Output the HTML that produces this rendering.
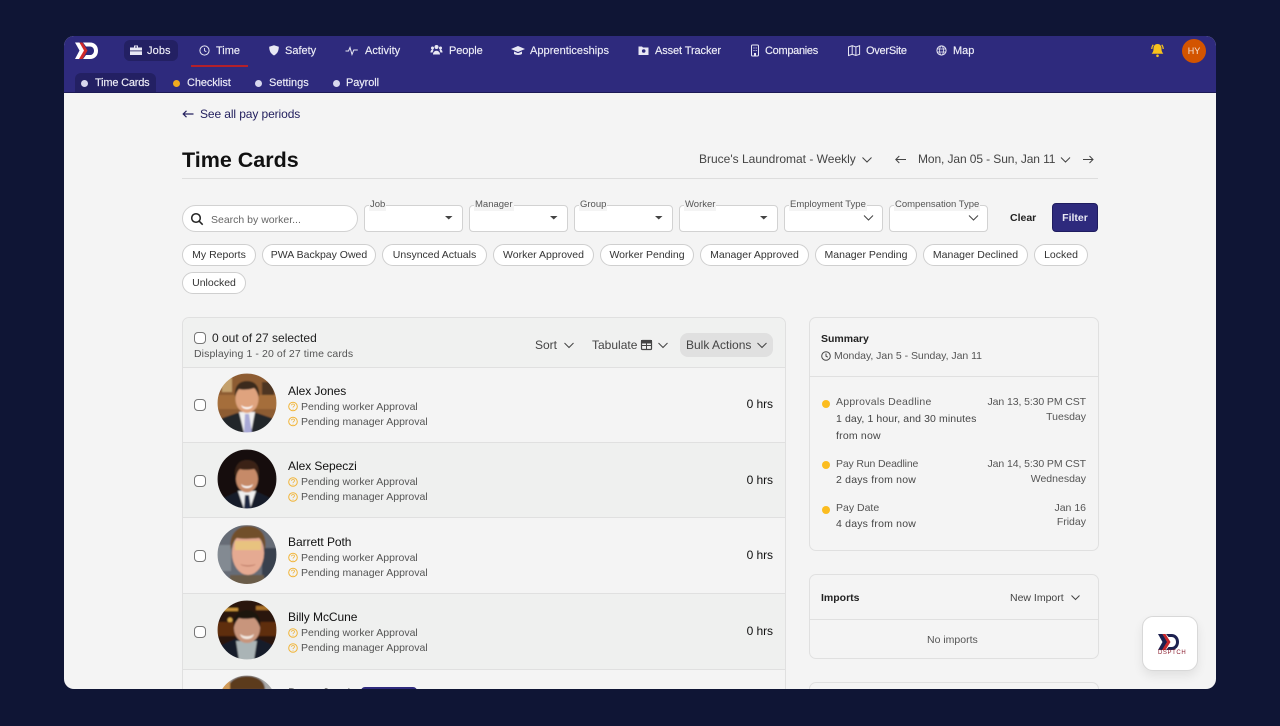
<!DOCTYPE html>
<html lang="en"><head><meta charset="utf-8"><title>Time Cards</title>
<style>
*{box-sizing:border-box}
html,body{margin:0;padding:0;width:1280px;height:726px;overflow:hidden;background:#0f1535;font-family:"Liberation Sans",sans-serif}
#win{position:absolute;left:64px;top:36px;width:1152px;height:653px;border-radius:10px;overflow:hidden;background:#f4f4f4}
#in{position:absolute;left:-64px;top:-36px;width:1280px;height:726px}
.a{position:absolute}
.t{position:absolute;white-space:nowrap;line-height:14px;height:14px}
svg{position:absolute;overflow:visible}
.nav{color:#eeeef8;font-size:11px;-webkit-text-stroke:.15px #eeeef8}
.sel{position:absolute;top:205px;width:99px;height:27px;background:#fff;border:1px solid #d2d2d2;border-radius:4px}
.lab{position:absolute;top:199px;height:12px;line-height:12px;font-size:9.5px;color:#555;background:#f4f4f4;padding:0 1px;white-space:nowrap}
.chip{position:absolute;height:22px;line-height:20px;background:#fff;border:1px solid #cfcfcf;border-radius:11px;font-size:10.5px;color:#333;text-align:center;white-space:nowrap}
.name{font-size:12px;color:#111;letter-spacing:-.05px}
.st{font-size:10.5px;color:#555}
.g{font-size:10.5px;color:#555}
.cb{position:absolute;left:194px;width:12px;height:12px;background:#fff;border:1px solid #777;border-radius:4px}
.panel{position:absolute;border:1px solid #e0e0e0;border-radius:7px}
.r{text-align:right}
</style></head><body>
<div id="win"><div id="in">
<!-- nav -->
<div class="a" style="left:64px;top:36px;width:1152px;height:57px;background:#2e2a7d;border-bottom:1px solid #1c1a55"></div>
<svg style="left:0;top:0" width="1" height="1">
<path d="M75 42.500h4.500l5 8-5 8.500h-4.500l4.500-8.500z" fill="#fff"/>
<path d="M79.500 42.500h3l5 8-5 8.500h-3.500l5-8.500z" fill="#d02a2a"/>
<path d="M83 42.500h7c5 0 8 3.500 8 8.200s-3 8.300-8 8.300h-7l3-4h4c2.500 0 4-2 4-4.300s-1.500-4.200-4-4.200h-4z" fill="#fff"/>
</svg>
<div class="a" style="left:124px;top:40px;width:54px;height:21px;background:#232063;border-radius:6px"></div>
<div class="a" style="left:191px;top:65px;width:57px;height:2px;background:#b3202a"></div>
<svg style="left:0;top:0" width="1" height="1" fill="#e8e8f4" stroke="none">
<path d="M130 47.500h12v7.500h-12zM134 47.500v-2h4v2h-1v-1h-2v1z"/><rect x="130" y="50.500" width="12" height=".8" fill="#232063"/>
<circle cx="204.500" cy="50.500" r="4.600" fill="none" stroke="#e8e8f4" stroke-width="1"/><path d="M204.500 48v2.700l1.800 1" fill="none" stroke="#e8e8f4" stroke-width=".9"/>
<path d="M274 45.200l4.800 1.600c0 4-1.400 7-4.800 8.700-3.400-1.700-4.800-4.700-4.800-8.700z"/>
<path d="M345.500 51h3l1.500-3.500 2 7 1.800-4.500h4" fill="none" stroke="#e8e8f4" stroke-width="1"/>
<circle cx="436.500" cy="47" r="2"/><circle cx="432.500" cy="48" r="1.500"/><circle cx="440.500" cy="48" r="1.500"/><path d="M433 54.500c0-5 7-5 7 0zM430.500 52.500c0-3 2.500-3.500 3-2.500l-1 2.500zM442.500 52.500c0-3-2.500-3.500-3-2.500l1 2.500z"/>
<path d="M518 46l7 3-7 3-7-3z"/><path d="M514 51.500v2.500c2 1.300 6 1.300 8 0v-2.500l-4 1.800z"/>
<path d="M638.500 46.500h3.500l1 1h5.500v7.500h-10z"/><circle cx="643.700" cy="51" r="1.800" fill="#2e2a7d"/>
<rect x="751.500" y="45" width="7" height="11" rx="1" fill="none" stroke="#e8e8f4" stroke-width="1"/><path d="M753.500 47.500h1v1h-1zM755.700 47.500h1v1h-1zM753.500 50h1v1h-1zM755.700 50h1v1h-1zM754 53h2v3h-2z"/>
<path d="M848.500 47l3.700-1.300 3.700 1.300 3.700-1.300v8.600l-3.700 1.200-3.700-1.200-3.700 1.200zM852.200 45.700v8.800M855.900 47v8.800" fill="none" stroke="#e8e8f4" stroke-width="1"/>
<circle cx="941.500" cy="50.500" r="4.600" fill="none" stroke="#e8e8f4" stroke-width="1"/><ellipse cx="941.500" cy="50.500" rx="2" ry="4.600" fill="none" stroke="#e8e8f4" stroke-width=".8"/><path d="M937 49h9M937 52h9" stroke="#e8e8f4" stroke-width=".8"/>
</svg>
<span class="t nav" style="left:147px;top:44px;letter-spacing:.1px">Jobs</span>
<span class="t nav" style="left:216px;top:44px">Time</span>
<span class="t nav" style="left:285px;top:44px">Safety</span>
<span class="t nav" style="left:365px;top:44px;letter-spacing:.05px">Activity</span>
<span class="t nav" style="left:449px;top:44px;letter-spacing:-.1px">People</span>
<span class="t nav" style="left:530px;top:44px;letter-spacing:.05px">Apprenticeships</span>
<span class="t nav" style="left:655px;top:44px;letter-spacing:-.1px">Asset Tracker</span>
<span class="t nav" style="left:765px;top:44px;letter-spacing:-.3px">Companies</span>
<span class="t nav" style="left:866px;top:44px;letter-spacing:-.25px">OverSite</span>
<span class="t nav" style="left:953px;top:44px">Map</span>
<svg style="left:0;top:0" width="1" height="1">
<path d="M1157.500 44c3 0 4 2.300 4 4.800 0 2.500.8 3.700 1.800 5h-11.600c1-1.300 1.800-2.500 1.800-5 0-2.500 1-4.800 4-4.800z" fill="#f8c21c"/><circle cx="1157.500" cy="55.800" r="1.300" fill="#f8c21c"/>
<path d="M1151.800 49c0-1.800.6-3.200 1.500-4.300M1163.200 49c0-1.800-.6-3.200-1.500-4.300" fill="none" stroke="#f8c21c" stroke-width="1.200"/>
</svg>
<div class="a" style="left:1182px;top:39px;width:24px;height:24px;border-radius:50%;background:#d35400;color:#f5e6da;font-size:9px;line-height:24px;text-align:center">HY</div>
<!-- subnav -->
<div class="a" style="left:75px;top:73px;width:81px;height:19px;background:#232063;border-radius:6px 6px 0 0"></div>
<div class="a" style="left:81px;top:79.500px;width:7px;height:7px;border-radius:50%;background:#d8d8ee"></div>
<div class="a" style="left:173px;top:79.500px;width:7px;height:7px;border-radius:50%;background:#f0aa1e"></div>
<div class="a" style="left:255px;top:79.500px;width:7px;height:7px;border-radius:50%;background:#d8d8ee"></div>
<div class="a" style="left:333px;top:79.500px;width:7px;height:7px;border-radius:50%;background:#d8d8ee"></div>
<span class="t nav" style="left:95px;top:76px;letter-spacing:-.2px">Time Cards</span>
<span class="t nav" style="left:187px;top:76px;letter-spacing:-.1px">Checklist</span>
<span class="t nav" style="left:269px;top:76px">Settings</span>
<span class="t nav" style="left:346px;top:76px;letter-spacing:-.1px">Payroll</span>
<!-- header -->
<svg style="left:0;top:0" width="1" height="1" fill="none" stroke="#24215f" stroke-width="1.200">
<path d="M183 114h10.500M186.500 110.800l-3.300 3.200 3.300 3.200"/></svg>
<span class="t" style="left:200px;top:107px;font-size:12px;color:#24215f;letter-spacing:-.1px">See all pay periods</span>
<span class="t" style="left:182px;top:147px;height:26px;line-height:26px;font-size:21.500px;font-weight:700;color:#111">Time Cards</span>
<span class="t" style="left:699px;top:152px;font-size:12px;color:#444">Bruce's Laundromat - Weekly</span>
<span class="t" style="left:918px;top:152px;font-size:12px;color:#444;letter-spacing:-.1px">Mon, Jan 05 - Sun, Jan 11</span>
<svg style="left:0;top:0" width="1" height="1" fill="none" stroke="#444" stroke-width="1">
<path d="M862.500 157.500l4.500 4.500 4.500-4.500M1061 157.500l4.500 4.500 4.500-4.500M896 159.500h10M899.300 156l-3.500 3.500 3.500 3.500M1083 159.500h10M1089.500 156l3.500 3.500-3.500 3.500"/></svg>
<div class="a" style="left:182px;top:178px;width:916px;height:1px;background:#ddd"></div>
<!-- filters -->
<div class="a" style="left:182px;top:205px;width:176px;height:27px;background:#fff;border:1px solid #d2d2d2;border-radius:14px"></div>
<svg style="left:0;top:0" width="1" height="1" fill="none" stroke="#222" stroke-width="1.500"><circle cx="196" cy="218" r="4.300"/><path d="M199.200 221.200l3.500 3.500"/></svg>
<span class="t" style="left:211px;top:213px;font-size:10.500px;color:#666">Search by worker...</span>
<div class="sel" style="left:364px"></div><div class="sel" style="left:469px"></div><div class="sel" style="left:574px"></div><div class="sel" style="left:679px"></div><div class="sel" style="left:784px"></div><div class="sel" style="left:889px"></div>
<span class="lab" style="left:369px">Job</span><span class="lab" style="left:474px">Manager</span><span class="lab" style="left:579px">Group</span><span class="lab" style="left:684px">Worker</span><span class="lab" style="left:789px">Employment Type</span><span class="lab" style="left:894px">Compensation Type</span>
<svg style="left:0;top:0" width="1" height="1">
<path d="M445 216h7.500l-3.750 3.500zM550 216h7.500l-3.750 3.500zM655 216h7.500l-3.750 3.500zM760 216h7.500l-3.750 3.500z" fill="#444"/>
<path d="M864 215.500l4.500 4.500 4.500-4.500M969 215.500l4.500 4.500 4.500-4.500" fill="none" stroke="#444" stroke-width="1"/></svg>
<span class="t" style="left:1010px;top:211px;font-size:10.500px;font-weight:700;color:#222">Clear</span>
<div class="a" style="left:1052px;top:203px;width:46px;height:29px;background:#2e2a7d;border:1px solid #1f1c5f;border-radius:4px;color:#e8e8f4;font-size:10.500px;font-weight:700;line-height:28px;text-align:center">Filter</div>
<!-- chips -->
<div class="chip" style="left:182px;top:244px;width:74px">My Reports</div>
<div class="chip" style="left:262px;top:244px;width:114px">PWA Backpay Owed</div>
<div class="chip" style="left:382px;top:244px;width:105px">Unsynced Actuals</div>
<div class="chip" style="left:493px;top:244px;width:101px">Worker Approved</div>
<div class="chip" style="left:600px;top:244px;width:94px">Worker Pending</div>
<div class="chip" style="left:700px;top:244px;width:109px">Manager Approved</div>
<div class="chip" style="left:815px;top:244px;width:102px">Manager Pending</div>
<div class="chip" style="left:923px;top:244px;width:105px">Manager Declined</div>
<div class="chip" style="left:1034px;top:244px;width:54px">Locked</div>
<div class="chip" style="left:182px;top:272px;width:64px">Unlocked</div>
<!-- list -->
<div class="panel" style="left:182px;top:317px;width:604px;height:420px;background:#f4f4f4"></div>
<div class="a" style="left:183px;top:318px;width:602px;height:49px;background:#f0f1f0;border-radius:7px 7px 0 0"></div>
<div class="a" style="left:183px;top:367px;width:602px;height:1px;background:#e0e0e0"></div>
<div class="a" style="left:183px;top:442px;width:602px;height:76px;background:#eff0ef;border-top:1px solid #e0e0e0;border-bottom:1px solid #e0e0e0"></div>
<div class="a" style="left:183px;top:593px;width:602px;height:77px;background:#eff0ef;border-top:1px solid #e0e0e0;border-bottom:1px solid #e0e0e0"></div>
<div class="cb" style="top:332px"></div>
<span class="t" style="left:212px;top:331px;font-size:12px;color:#222">0 out of 27 selected</span>
<span class="t g" style="left:194px;top:347px;letter-spacing:.1px">Displaying 1 - 20 of 27 time cards</span>
<span class="t" style="left:535px;top:338px;font-size:12px;color:#444">Sort</span>
<span class="t" style="left:592px;top:338px;font-size:12px;color:#444">Tabulate</span>
<div class="a" style="left:680px;top:333px;width:93px;height:24px;background:#e0e0e0;border-radius:8px"></div>
<span class="t" style="left:686px;top:338px;font-size:12px;color:#444">Bulk Actions</span>
<svg style="left:0;top:0" width="1" height="1" fill="none" stroke="#444" stroke-width="1">
<path d="M564.500 343l4.500 4.500 4.500-4.500M658.500 343l4.500 4.500 4.500-4.500M757.500 343l4.500 4.500 4.500-4.500"/>
<rect x="641.500" y="340.500" width="10" height="9" rx="1" stroke-width="1.200"/><path d="M641.500 345.500h10M646.500 343v6.500"/><rect x="641.500" y="340.500" width="10" height="2.500" fill="#444"/></svg>
<!-- avatars -->
<svg style="left:0;top:0" width="1" height="1"><defs>
<clipPath id="c1"><circle cx="247" cy="403" r="29.500"/></clipPath><clipPath id="c2"><circle cx="247" cy="479" r="29.500"/></clipPath><clipPath id="c3"><circle cx="247" cy="554.500" r="29.500"/></clipPath><clipPath id="c4"><circle cx="247" cy="630" r="29.500"/></clipPath><clipPath id="c5"><circle cx="247" cy="705" r="29.500"/></clipPath>
<filter id="b" x="-20%" y="-20%" width="140%" height="140%"><feGaussianBlur stdDeviation=".7"/></filter></defs>
<g clip-path="url(#c1)"><g filter="url(#b)"><rect x="217" y="373" width="60" height="60" fill="#8d5c30"/><rect x="222" y="378" width="10" height="14" fill="#c4a06c"/><rect x="262" y="382" width="12" height="14" fill="#4e3420"/><rect x="217" y="395" width="60" height="14" fill="#a56e3a"/>
<path d="M217 433v-13l20-7h20l20 7v13z" fill="#24262c"/><path d="M239 412h16l-4 21h-7z" fill="#f0f0f0"/><path d="M245 414h4l3 19h-8z" fill="#a9a9d6"/><ellipse cx="247" cy="399" rx="11.500" ry="14" fill="#dfa37e"/><path d="M235 397c-1-12 5-16 12-16s13 4 12 16c-2-5-3-8-5-9-5 2-12 2-15 1-2 2-3 4-4 8z" fill="#3b2a1e"/><path d="M241 405c3 3 9 3 12 0-1 3-3 4-6 4s-5-1-6-4z" fill="#fff"/></g></g>
<g clip-path="url(#c2)"><g filter="url(#b)"><rect x="217" y="449" width="60" height="60" fill="#121110"/><path d="M217 509v-8l20-9 20 0 20 9v8z" fill="#161a2c"/><path d="M238 491h18l-6 18h-6z" fill="#f0f0f0"/><path d="M245 495h4l2 14h-7z" fill="#1b2540"/><ellipse cx="247" cy="479" rx="11" ry="13.500" fill="#c68a68"/><path d="M235 476c-1-11 5-16 12-16s13 4 12 16c-2-4-3-6-5-7-5 1-12 1-14 0-2 2-4 4-5 7z" fill="#3a2418"/><path d="M241 484c3 3 9 3 12 0-1 3-3 4-6 4s-5-1-6-4z" fill="#fff"/></g></g>
<g clip-path="url(#c3)"><g filter="url(#b)"><rect x="217" y="525" width="60" height="60" fill="#666c76"/><rect x="217" y="545" width="14" height="26" fill="#838a92"/><rect x="262" y="548" width="15" height="30" fill="#39404e"/><path d="M230 585v-10l34 0v10z" fill="#6b5c4a"/><ellipse cx="248" cy="553" rx="16" ry="22" fill="#e5aa92"/><rect x="235" y="541" width="26" height="9" fill="#e8c37f"/><path d="M231 550c-3-16 7-24 17-24s20 7 17 24c-2-6-3-10-6-12-8 1-17 1-22 0-3 2-5 6-6 12z" fill="#71502c"/><path d="M240 564c4 2 12 2 16 0-3 3-13 3-16 0z" fill="#a8604f"/></g></g>
<g clip-path="url(#c4)"><g filter="url(#b)"><rect x="217" y="600" width="60" height="60" fill="#2c1608"/><rect x="224" y="608" width="14" height="3" fill="#c89338"/><rect x="256" y="606" width="14" height="4" fill="#a87028"/><circle cx="230" cy="620" r="2.500" fill="#d8a848"/><rect x="217" y="622" width="60" height="14" fill="#5e2e10"/><path d="M217 660v-13l18-8 24 0 18 8v13z" fill="#141a2a"/><path d="M236 641h21l-3 19h-15z" fill="#aab4b6"/><ellipse cx="247" cy="628" rx="13" ry="15" fill="#c8957c"/><path d="M234 627c-2-12 6-17 13-17s15 5 13 17c-2-5-4-8-6-9-6 1-12 1-15 0-2 2-4 5-5 9z" fill="#1f150d"/><path d="M240 634c4 3 10 3 14 0-1 4-4 5-7 5s-6-1-7-5z" fill="#f2e8e0"/></g></g>
<g clip-path="url(#c5)"><g filter="url(#b)"><rect x="217" y="675" width="60" height="30" fill="#a8a8a8"/><path d="M228 690c0-10 10-14 19-14s18 4 18 14z" fill="#5c3a1c"/><rect x="222" y="680" width="8" height="12" fill="#d09a58"/></g></g>
</svg>
<!-- rows -->
<svg style="left:0;top:0" width="1" height="1"><defs><g id="q"><circle cx="0" cy="0" r="4.300" fill="none" stroke="#f1b53a" stroke-width="1"/><path d="M-1.500-1.200c.2-1.700 3-1.700 3 0 0 1.300-1.500 1-1.500 2.300M0 2.400v.7" fill="none" stroke="#f1b53a" stroke-width=".8"/></g></defs>
<use href="#q" x="293" y="406.500"/><use href="#q" x="293" y="421.500"/><use href="#q" x="293" y="482"/><use href="#q" x="293" y="497"/><use href="#q" x="293" y="557.500"/><use href="#q" x="293" y="572.500"/><use href="#q" x="293" y="633"/><use href="#q" x="293" y="648"/></svg>
<div class="cb" style="top:399px"></div><div class="cb" style="top:475px"></div><div class="cb" style="top:550px"></div><div class="cb" style="top:626px"></div>
<span class="t name" style="left:288px;top:384px">Alex Jones</span><span class="t st" style="left:301px;top:400px">Pending worker Approval</span><span class="t st" style="left:301px;top:414.500px">Pending manager Approval</span><span class="t name r" style="left:723px;top:397px;width:50px">0 hrs</span>
<span class="t name" style="left:288px;top:459px">Alex Sepeczi</span><span class="t st" style="left:301px;top:475px">Pending worker Approval</span><span class="t st" style="left:301px;top:490px">Pending manager Approval</span><span class="t name r" style="left:723px;top:473px;width:50px">0 hrs</span>
<span class="t name" style="left:288px;top:534.500px">Barrett Poth</span><span class="t st" style="left:301px;top:550.500px">Pending worker Approval</span><span class="t st" style="left:301px;top:565.500px">Pending manager Approval</span><span class="t name r" style="left:723px;top:548px;width:50px">0 hrs</span>
<span class="t name" style="left:288px;top:610px">Billy McCune</span><span class="t st" style="left:301px;top:626px">Pending worker Approval</span><span class="t st" style="left:301px;top:641px">Pending manager Approval</span><span class="t name r" style="left:723px;top:624px;width:50px">0 hrs</span>
<span class="t name" style="left:288px;top:686px">Bryan Jacobs</span>
<div class="a" style="left:361px;top:687px;width:56px;height:14px;background:#2e2a7d;border-radius:4px"></div>
<!-- summary -->
<div class="panel" style="left:809px;top:317px;width:290px;height:234px"></div>
<div class="a" style="left:810px;top:376px;width:288px;height:1px;background:#e0e0e0"></div>
<span class="t" style="left:821px;top:332px;font-size:10.500px;font-weight:700;color:#222">Summary</span>
<svg style="left:0;top:0" width="1" height="1" fill="none" stroke="#444" stroke-width="1"><circle cx="826" cy="356" r="4.300"/><path d="M826 353.500v2.700l1.800 1"/></svg>
<span class="t g" style="left:834px;top:349px;letter-spacing:-.03px">Monday, Jan 5 - Sunday, Jan 11</span>
<div class="a" style="left:821.500px;top:399.500px;width:8px;height:8px;border-radius:50%;background:#fbbc1f"></div>
<div class="a" style="left:821.500px;top:461px;width:8px;height:8px;border-radius:50%;background:#fbbc1f"></div>
<div class="a" style="left:821.500px;top:505.500px;width:8px;height:8px;border-radius:50%;background:#fbbc1f"></div>
<span class="t g" style="left:836px;top:395px;letter-spacing:.25px">Approvals Deadline</span>
<span class="t g" style="left:836px;top:411.500px;color:#444;letter-spacing:.1px">1 day, 1 hour, and 30 minutes</span>
<span class="t g" style="left:836px;top:429px;color:#444;letter-spacing:.2px">from now</span>
<span class="t g" style="left:836px;top:457px;letter-spacing:-.15px">Pay Run Deadline</span>
<span class="t g" style="left:836px;top:473px;color:#444;letter-spacing:.2px">2 days from now</span>
<span class="t g" style="left:836px;top:501px">Pay Date</span>
<span class="t g" style="left:836px;top:517px;color:#444;letter-spacing:.2px">4 days from now</span>
<span class="t g r" style="left:966px;width:120px;top:395px;letter-spacing:-.1px">Jan 13, 5:30 PM CST</span>
<span class="t g r" style="left:966px;width:120px;top:410px">Tuesday</span>
<span class="t g r" style="left:966px;width:120px;top:457px;letter-spacing:-.1px">Jan 14, 5:30 PM CST</span>
<span class="t g r" style="left:966px;width:120px;top:472px">Wednesday</span>
<span class="t g r" style="left:966px;width:120px;top:501px">Jan 16</span>
<span class="t g r" style="left:966px;width:120px;top:515px">Friday</span>
<!-- imports -->
<div class="panel" style="left:809px;top:574px;width:290px;height:85px"></div>
<div class="a" style="left:810px;top:619px;width:288px;height:1px;background:#e0e0e0"></div>
<span class="t" style="left:821px;top:591px;font-size:10.500px;font-weight:700;color:#222">Imports</span>
<span class="t g" style="left:1010px;top:591px;color:#444">New Import</span>
<svg style="left:0;top:0" width="1" height="1" fill="none" stroke="#444" stroke-width="1"><path d="M1071.500 595.500l4 4 4-4"/></svg>
<span class="t g" style="left:927px;top:633px">No imports</span>
<div class="panel" style="left:809px;top:682px;width:290px;height:60px"></div>
<!-- widget -->
<div class="a" style="left:1142px;top:616px;width:56px;height:55px;background:#fff;border:1px solid #d8d8d8;border-radius:11px;box-shadow:0 5px 10px rgba(0,0,0,.08)"></div>
<svg style="left:0;top:0" width="1" height="1">
<path d="M1158 634h4.500l5 8-5 8h-4.500l4.500-8z" fill="#1d2150"/><path d="M1162.500 634h3l5 8-5 8h-3.500l5-8z" fill="#c8262a"/><path d="M1166 634h5.500c4.500 0 7.500 3.500 7.500 8s-3 8-7.500 8h-5.500l2.500-3h3c2.800 0 4.500-2.200 4.500-5s-1.700-5-4.500-5h-3z" fill="#1d2150"/></svg>
<span class="t" style="left:1158px;top:650px;height:7px;line-height:7px;font-size:6px;color:#8c2030;letter-spacing:.6px">DSPTCH</span>
</div></div>
</body></html>
